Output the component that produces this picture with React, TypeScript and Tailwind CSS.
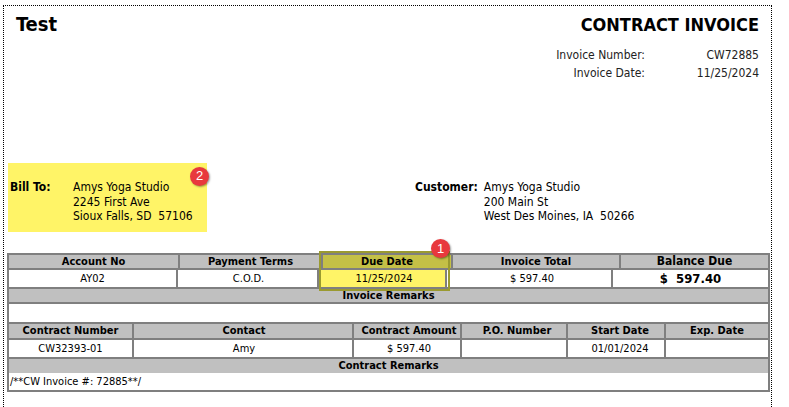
import React from "react";

const F = { fontFamily: "Tahoma, 'DejaVu Sans Condensed', 'Liberation Sans', sans-serif" };

function Badge({ n }: { n: string }) {
  return (
    <div className="absolute w-[19px] h-[19px] rounded-full bg-[#e8383d] text-white text-[13px] flex items-center justify-center shadow-[1px_1px_2px_rgba(0,0,0,0.4)]" style={{ fontFamily: "'Liberation Sans', sans-serif" }}>
      {n}
    </div>
  );
}

const H = "bg-[#c0c0c0] font-bold text-center border-2 border-[#7f7f7f]";
const D = "bg-white text-center border-2 border-[#7f7f7f]";

export default function App() {
  return (
    <div className="w-[789px] h-[407px] bg-white overflow-hidden text-[11px] text-black" style={F}>
      <div className="relative ml-[3px] mt-[5px] w-[769px] h-[410px] border-l border-t border-r border-dotted border-black">
        {/* header */}
        <div className="flex justify-between pl-[12px] pr-[12px] pt-[4px]">
          <div className="text-[20px] font-bold leading-[28px]">Test</div>
          <div className="flex flex-col items-end">
            <div className="text-[18px] font-bold leading-[26px] pt-[2px]">CONTRACT INVOICE</div>
            <div className="grid grid-cols-[auto_114px] mt-[8px] leading-[18px] text-[12px] text-[#222]">
              <div className="text-right">Invoice Number:</div><div className="text-right">CW72885</div>
              <div className="text-right">Invoice Date:</div><div className="text-right">11/25/2024</div>
            </div>
          </div>
        </div>
        {/* addresses */}
        <div className="relative flex mt-[81px] h-[69px] text-[12px]">
          <div className="relative ml-[4px] w-[199px] h-[69px] bg-[#fff467] flex pt-[17px] leading-[14.5px]">
            <div className="w-[65px] pl-[2px] font-bold">Bill To:</div>
            <div>Amys Yoga Studio<br />2245 First Ave<br />Sioux Falls, SD&nbsp;&nbsp;57106</div>
            <div className="absolute left-[182px] top-[4px]"><Badge n="2" /></div>
          </div>
          <div className="flex ml-[208px] pt-[17px] leading-[14.5px]">
            <div className="font-bold pr-[6px]">Customer:</div>
            <div>Amys Yoga Studio<br />200 Main St<br />West Des Moines, IA&nbsp;&nbsp;50266</div>
          </div>
        </div>
        {/* table 1 */}
        <div className="relative ml-[3px] mt-[21px] w-[763px]">
          <div className="grid grid-cols-[171px_143px_130px_168px_151px] -space-x-[2px]">
            <div className={`${H} h-[17px] leading-[13px]`}>Account No</div>
            <div className={`${H} h-[17px] leading-[13px]`}>Payment Terms</div>
            <div className={`bg-[#c4c046] font-bold text-center border-2 border-[#7f7f7f] h-[17px] leading-[13px]`}>Due Date</div>
            <div className={`${H} h-[17px] leading-[13px]`}>Invoice Total</div>
            <div className={`${H} h-[17px] leading-[13px] text-[12px]`}>Balance Due</div>
          </div>
          <div className="grid grid-cols-[171px_143px_130px_168px_151px] -mt-[2px]">
            <div className={`${D} h-[21px] leading-[17px]`}>AY02</div>
            <div className={`${D} h-[21px] leading-[17px] -ml-[2px]`}>C.O.D.</div>
            <div className={`bg-[#fff467] text-center border-2 border-[#7f7f7f] h-[21px] leading-[17px] -ml-[4px]`}>11/25/2024</div>
            <div className={`${D} h-[21px] leading-[17px] -ml-[6px]`}>$ 597.40</div>
            <div className={`${D} h-[21px] leading-[17px] -ml-[8px] font-bold text-[13px]`}>$&nbsp;&nbsp;597.40</div>
          </div>
          <div className={`${H} h-[17px] leading-[13px] -mt-[2px]`}>Invoice Remarks</div>
          <div className="h-[18px] bg-white border-x-2 border-[#7f7f7f]"></div>
          <div className="absolute left-[312px] top-[-2px] w-[131px] h-[40px] border-2 border-[#9a9a30]"></div>
          <div className="absolute left-[424px] top-[-14px]"><Badge n="1" /></div>
          {/* table 2 */}
          <div className="grid grid-cols-[127px_222px_110px_108px_100px_96px]">
            {["Contract Number", "Contact", "Contract Amount", "P.O. Number", "Start Date", "Exp. Date"].map((t, i) => (
              <div key={t} className={`${H} h-[18px] leading-[14px]`} style={{ marginLeft: i ? -2 * i : 0 }}>{t}</div>
            ))}
          </div>
          <div className="grid grid-cols-[127px_222px_110px_108px_100px_96px] -mt-[2px]">
            {["CW32393-01", "Amy", "$ 597.40", "", "01/01/2024", ""].map((t, i) => (
              <div key={i} className={`${D} h-[21px] leading-[17px]`} style={{ marginLeft: i ? -2 * i : 0 }}>{t}</div>
            ))}
          </div>
          <div className={`${H} h-[18px] leading-[14px] -mt-[2px]`}>Contract Remarks</div>
          <div className="h-[19px] bg-white border-x-2 border-b-2 border-[#7f7f7f] -mt-[2px] pt-[2px] pl-[1px] leading-[14px]">/**CW Invoice #: 72885**/</div>
        </div>
      </div>
    </div>
  );
}
